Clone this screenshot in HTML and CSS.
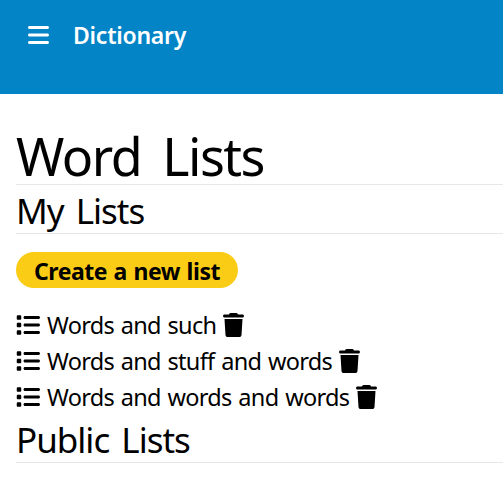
FILE: index.html
```html
<!DOCTYPE html>
<html lang="en">
<head>
<meta charset="utf-8">
<title>Dictionary</title>
<link rel="stylesheet" href="styles.css">
</head>
<body>
<svg class="sprite" aria-hidden="true">
  <symbol id="list" viewBox="0 0 512 512"><path d="M40 48C26.700 48 16 58.700 16 72v48c0 13.300 10.700 24 24 24H88c13.300 0 24-10.700 24-24V72c0-13.300-10.700-24-24-24H40zM192 64c-17.700 0-32 14.300-32 32s14.300 32 32 32H480c17.700 0 32-14.300 32-32s-14.300-32-32-32H192zm0 160c-17.700 0-32 14.300-32 32s14.300 32 32 32H480c17.700 0 32-14.300 32-32s-14.300-32-32-32H192zm0 160c-17.700 0-32 14.300-32 32s14.300 32 32 32H480c17.700 0 32-14.300 32-32s-14.300-32-32-32H192zM16 232v48c0 13.300 10.700 24 24 24H88c13.300 0 24-10.700 24-24V232c0-13.300-10.700-24-24-24H40c-13.300 0-24 10.700-24 24zM40 368c-13.300 0-24 10.700-24 24v48c0 13.300 10.700 24 24 24H88c13.300 0 24-10.700 24-24V392c0-13.300-10.700-24-24-24H40z"/></symbol>
  <symbol id="trash" viewBox="0 0 448 512"><path d="M135.200 17.700L128 32H32C14.300 32 0 46.300 0 64S14.300 96 32 96H416c17.700 0 32-14.300 32-32s-14.300-32-32-32H320l-7.200-14.300C307.400 6.800 296.300 0 284.200 0H163.800c-12.100 0-23.200 6.800-28.600 17.700zM416 128H32L53.200 467c1.600 25.300 22.600 45 47.900 45H346.900c25.300 0 46.300-19.700 47.900-45L416 128z"/></symbol>
</svg>
<header class="topbar">
  <svg class="menu" viewBox="0 0 448 512"><path d="M0 96C0 78.300 14.300 64 32 64H416c17.700 0 32 14.300 32 32s-14.300 32-32 32H32C14.300 128 0 113.700 0 96zM0 256c0-17.700 14.300-32 32-32H416c17.700 0 32 14.300 32 32s-14.300 32-32 32H32c-17.700 0-32-14.300-32-32zM448 416c0 17.700-14.300 32-32 32H32c-17.700 0-32-14.300-32-32s14.300-32 32-32H416c17.700 0 32 14.300 32 32z"/></svg>
  <span class="brand">Dictionary</span>
</header>
<main>
  <h1>Word Lists</h1>
  <h2>My Lists</h2>
  <button class="create">Create a new list</button>
  <ul class="lists">
    <li><svg class="list-icon"><use href="#list"/></svg><span class="name-1">Words and such</span><svg class="trash-icon"><use href="#trash"/></svg></li>
    <li><svg class="list-icon"><use href="#list"/></svg><span class="name-2">Words and stuff and words</span><svg class="trash-icon"><use href="#trash"/></svg></li>
    <li><svg class="list-icon"><use href="#list"/></svg><span class="name-3">Words and words and words</span><svg class="trash-icon"><use href="#trash"/></svg></li>
  </ul>
  <h2 class="public">Public Lists</h2>
</main>
</body>
</html>
```
FILE: styles.css
```css
* { box-sizing: border-box; }
body { margin: 0; background: #fff; color: #000; font: 23.500px/36px "Segoe UI", "Noto Sans", sans-serif; overflow: hidden; }
.sprite { display: none; }
svg { fill: currentColor; flex: none; }
.topbar { display: flex; align-items: flex-start; height: 94px; padding: 17px 28px; gap: 24px; background: #0284c7; color: #fff; }
.menu { width: 21px; height: 24px; margin-top: 6px; }
.brand { font-weight: 600; font-size: 23px; letter-spacing: -0.250px; }
main { padding: 36px 0 0 16px; }
h1, h2 { margin: 0; font-weight: 400; border-bottom: 1px solid #e5e7eb; white-space: nowrap; }
h1 { height: 55px; line-height: 51px; font-size: 52px; letter-spacing: -1.500px; word-spacing: 9px; }
h2 { height: 49px; line-height: 52px; font-size: 35px; letter-spacing: -1px; word-spacing: 4px; }
.create { display: block; width: 222px; height: 36px; margin: 18px 0; padding: 2px 0 0; border: 0; border-radius: 18px; background: #facc15; color: #000; font: 700 23px/34px "Segoe UI", "Noto Sans", sans-serif; letter-spacing: -0.450px; word-spacing: 1px; white-space: nowrap; }
.lists { margin: 0; padding: 0; list-style: none; }
.lists li { display: flex; align-items: center; height: 36px; padding-top: 2px; white-space: nowrap; }
.list-icon { width: 24px; height: 24px; margin-right: 7px; }
.trash-icon { width: 21px; height: 24px; margin-left: 6px; }
.name-1, .name-2, .name-3 { letter-spacing: -0.700px; word-spacing: 1.300px; }
.name-1 { width: 170px; }
.name-2 { width: 286px; }
.name-3 { width: 303px; }
```
